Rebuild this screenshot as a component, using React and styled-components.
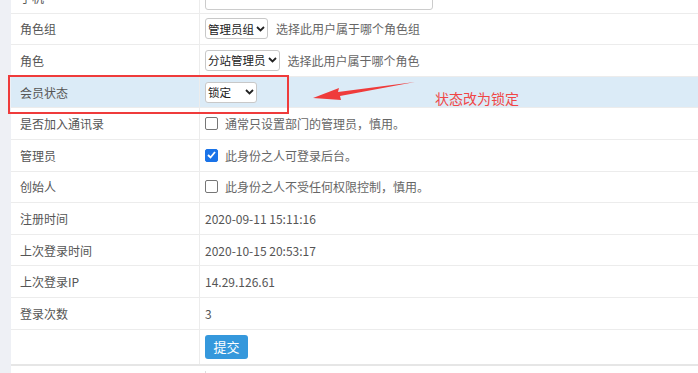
import React from 'react'
import styled, { createGlobalStyle } from 'styled-components'

const GlobalStyle = createGlobalStyle`
  html, body {
    margin: 0;
    padding: 0;
    background: #fff;
    font-family: "Noto Sans CJK SC", "Liberation Sans", sans-serif;
    overflow: hidden;
  }
`

const rows = [
  { label: '手机', type: 'input' },
  { label: '角色组', type: 'select', value: '管理员组', hint: '选择此用户属于哪个角色组' },
  { label: '角色', type: 'select', value: '分站管理员', hint: '选择此用户属于哪个角色' },
  { label: '会员状态', type: 'select', value: '锁定', width: 52, active: true },
  { label: '是否加入通讯录', type: 'check', hint: '通常只设置部门的管理员，慎用。' },
  { label: '管理员', type: 'check', checked: true, hint: '此身份之人可登录后台。' },
  { label: '创始人', type: 'check', hint: '此身份之人不受任何权限控制，慎用。' },
  { label: '注册时间', type: 'text', value: '2020-09-11 15:11:16' },
  { label: '上次登录时间', type: 'text', value: '2020-10-15 20:53:17' },
  { label: '上次登录IP', type: 'text', value: '14.29.126.61' },
  { label: '登录次数', type: 'text', value: '3' },
  { label: '', type: 'submit' },
]

const Page = styled.div`
  display: flex;
  margin-top: -19px;
  position: relative;
`

const Gutter = styled.div`
  width: 11px;
  flex-shrink: 0;
  background: #eef0f5;
`

const Main = styled.div`
  flex: 1;
`

const Table = styled.div`
  display: grid;
  grid-template-columns: 189px 1fr;
  border-bottom: 2px solid #e6e6e6;
`

const Label = styled.div`
  height: ${p => p.$tall ? 35 : 31.6}px;
  box-sizing: border-box;
  display: flex;
  align-items: center;
  padding-left: 9px;
  font-size: 12px;
  color: #555;
  border-top: 1px solid #ececec;
  border-right: 1px solid #ececec;
  background: ${p => p.$active ? '#dbebf7' : '#fff'};
`

const Cell = styled.div`
  height: ${p => p.$tall ? 35 : 31.6}px;
  box-sizing: border-box;
  display: flex;
  align-items: center;
  gap: ${p => p.$gap}px;
  padding-left: 5px;
  font-size: 12px;
  color: #555;
  border-top: 1px solid #ececec;
  background: ${p => p.$active ? '#dbebf7' : '#fff'};
`

const Input = styled.div`
  width: 228px;
  height: 26px;
  box-sizing: border-box;
  border: 1px solid #ccc;
  border-radius: 3px;
  background: #fff;
`

const Select = styled.div`
  width: ${p => p.$width ? `${p.$width}px` : 'auto'};
  height: 21px;
  box-sizing: border-box;
  display: flex;
  align-items: center;
  justify-content: space-between;
  gap: 2px;
  padding: 0 2px 0 2px;
  border: 1px solid #c8c8c8;
  border-radius: 3px;
  background: #fff;
  color: #222;
  font-size: 11.5px;
  white-space: nowrap;
`

const Box = styled.span`
  width: 13px;
  height: 13px;
  box-sizing: border-box;
  border-radius: 2px;
  border: 1px solid ${p => p.$checked ? '#1a73e8' : '#767676'};
  background: ${p => p.$checked ? '#1a73e8' : '#fff'};
  display: inline-flex;
  align-items: center;
  justify-content: center;
  margin-right: 1px;
`

const Hint = styled.span`
  color: #666;
`

const Button = styled.button`
  width: 43px;
  height: 24px;
  border: none;
  border-radius: 3px;
  background: #3598dc;
  color: #fff;
  font-family: inherit;
  font-size: 13px;
  padding: 0;
`

const Below = styled.div`
  height: 20px;
  display: flex;
`

const Tick = styled.div`
  margin-left: 194px;
  margin-top: 5px;
  width: 1px;
  height: 8px;
  background: #ddd;
`

const Highlight = styled.div`
  position: absolute;
  left: 8px;
  top: 94px;
  width: 281px;
  height: 39px;
  box-sizing: border-box;
  border: 2px solid #ef3b3b;
`

const Note = styled.div`
  position: absolute;
  left: 435px;
  top: 107px;
  font-size: 14px;
  color: #f04646;
`

const ArrowSvg = styled.svg`
  position: absolute;
  left: 310px;
  top: 99px;
`

const Chevron = () => (
  <svg width="9" height="6" viewBox="0 0 9 6">
    <path d="M1 1l3.5 3.5L8 1" fill="none" stroke="#222" strokeWidth="1.8" />
  </svg>
)

const Tickmark = () => (
  <svg width="9" height="8" viewBox="0 0 9 8">
    <path d="M1 4l2.5 2.5L8 1" fill="none" stroke="#fff" strokeWidth="1.8" />
  </svg>
)

const renderValue = row => {
  if (row.type === 'input') return <Input />
  if (row.type === 'select') {
    return (
      <>
        <Select $width={row.width}>{row.value}<Chevron /></Select>
        {row.hint && <Hint>{row.hint}</Hint>}
      </>
    )
  }
  if (row.type === 'check') {
    return (
      <>
        <Box $checked={row.checked}>{row.checked && <Tickmark />}</Box>
        <Hint>{row.hint}</Hint>
      </>
    )
  }
  if (row.type === 'submit') return <Button>提交</Button>
  return row.value
}

export default function App() {
  return (
    <>
      <GlobalStyle />
      <Page>
        <Gutter />
        <Main>
          <Table>
            {rows.map((row, i) => (
              <React.Fragment key={i}>
                <Label $active={row.active} $tall={row.type === 'submit'}>{row.label}</Label>
                <Cell
                  $active={row.active}
                  $tall={row.type === 'submit'}
                  $gap={row.type === 'select' ? 8 : 6}
                >
                  {renderValue(row)}
                </Cell>
              </React.Fragment>
            ))}
          </Table>
          <Below><Tick /></Below>
        </Main>
        <Highlight />
        <ArrowSvg width="110" height="24" viewBox="0 0 110 24">
          <path d="M105 2 L28 12 L29 8 L3 18 L31 20 L30 16 Z" fill="#ef3b3b" />
        </ArrowSvg>
        <Note>状态改为锁定</Note>
      </Page>
    </>
  )
}
